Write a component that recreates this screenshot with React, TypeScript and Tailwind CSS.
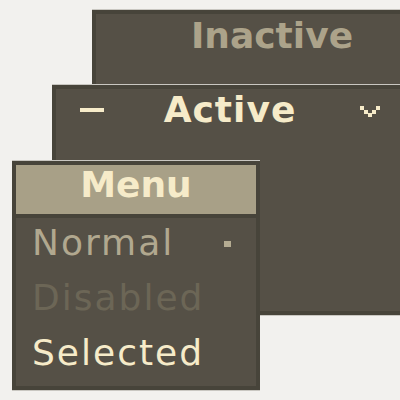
const font = { fontFamily: '"DejaVu Sans", "Liberation Sans", sans-serif' };

function Chevron() {
  return (
    <svg width="20" height="12" viewBox="0 0 20 12" shapeRendering="crispEdges">
      <g fill="#f6ebc9">
        <rect x="0" y="0" width="4" height="4" />
        <rect x="16" y="0" width="4" height="4" />
        <rect x="4" y="4" width="4" height="4" />
        <rect x="12" y="4" width="4" height="4" />
        <rect x="8" y="7" width="4" height="4" />
      </g>
    </svg>
  );
}

export default function App() {
  return (
    <div
      className="relative h-[400px] w-[400px] overflow-hidden bg-[#f2f1ee]"
      style={font}
    >
      {/* inactive window */}
      <div className="absolute left-[92px] top-[10px] h-[120px] w-[360px] border-4 border-[#47443a] bg-[#555046] shadow-[0_-1px_0_#c9c7c1]">
        <div className="pt-[4px] text-center text-[36px] font-bold leading-[36px] text-[#aca38a]">
          Inactive
        </div>
      </div>

      {/* active window */}
      <div className="absolute left-[52px] top-[85px] h-[230px] w-[356px] border-4 border-[#47443a] bg-[#555046] shadow-[0_-1px_0_#c9c7c1,0_1px_0_#c9c7c1]">
        <div className="grid grid-cols-[1fr_auto_1fr] items-center px-6 pt-[3px]">
          <div className="h-[4px] w-[24px] bg-[#f6ebc9]" />
          <div className="text-[36px] font-bold leading-[36px] tracking-[1px] text-[#f6ebc9]">
            Active
          </div>
          <div className="flex justify-end pt-[4px]">
            <Chevron />
          </div>
        </div>
      </div>

      {/* menu */}
      <div className="absolute left-[12px] top-[161px] flex h-[229px] w-[248px] flex-col border-4 border-[#47443a] bg-[#555046] shadow-[0_-1px_0_#c9c7c1,0_1px_0_#c9c7c1]">
        <div className="h-[53px] border-b-4 border-[#47443a] bg-[#a8a087] pt-[2px] text-center text-[36px] font-bold leading-[36px] text-[#f6ebc9]">
          Menu
        </div>
        <div className="flex flex-col gap-[19px] pl-4 pr-[25px] pt-[7px] text-[36px] leading-[36px] tracking-[2px]">
          <div className="flex items-center justify-between text-[#b1a88f]">
            <span>Normal</span>
            <span className="mt-[1px] h-[6px] w-[7px] bg-[#b5ac92]" />
          </div>
          <div className="text-[#6c6656]">Disabled</div>
          <div className="text-[#f6ebc9]">Selected</div>
        </div>
      </div>
    </div>
  );
}
